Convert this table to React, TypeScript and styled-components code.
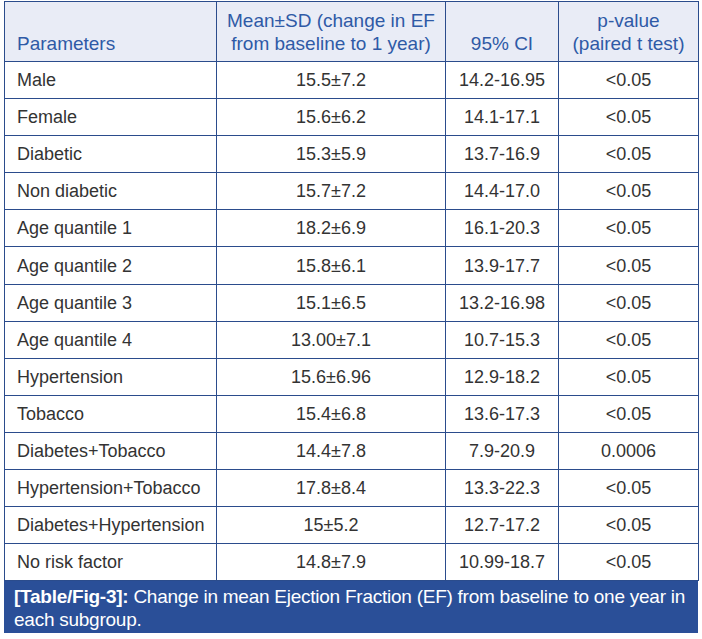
import styled, { createGlobalStyle } from 'styled-components';

const GlobalStyle = createGlobalStyle`
  html, body {
    margin: 0;
    padding: 0;
    background: #ffffff;
  }
  body {
    font-family: "Liberation Sans", Arial, sans-serif;
  }
`;

const Page = styled.div`
  padding: 1px 5px 0 4px;
  width: 694px;
`;

const Table = styled.table`
  width: 694px;
  border-collapse: collapse;
  table-layout: fixed;
  border: 1px solid #2b4c8c;
`;

const HeadCell = styled.th<{ $left?: boolean }>`
  height: 60px;
  padding: 0 6px 6px ${p => (p.$left ? '12px' : '6px')};
  box-sizing: border-box;
  vertical-align: bottom;
  text-align: ${p => (p.$left ? 'left' : 'center')};
  font-weight: 400;
  font-size: 19px;
  line-height: 23px;
  color: #2f5aa6;
  background: #e9ecf6;
  border: 1px solid #2b4c8c;
`;

const Cell = styled.td<{ $left?: boolean }>`
  height: 37.1px;
  padding: 1px 6px 0 ${p => (p.$left ? '12px' : '6px')};
  box-sizing: border-box;
  text-align: ${p => (p.$left ? 'left' : 'center')};
  vertical-align: middle;
  font-size: 18px;
  color: #333333;
  border: 1px solid #2b4c8c;
  white-space: nowrap;
`;

const Caption = styled.div`
  background: #2a4f98;
  color: #ffffff;
  padding: 4px 6px 2px 10px;
  font-size: 19px;
  line-height: 23px;
  letter-spacing: -0.25px;
`;

const Label = styled.b`
  font-weight: 700;
`;

const rows: [string, string, string, string][] = [
  ['Male', '15.5±7.2', '14.2-16.95', '<0.05'],
  ['Female', '15.6±6.2', '14.1-17.1', '<0.05'],
  ['Diabetic', '15.3±5.9', '13.7-16.9', '<0.05'],
  ['Non diabetic', '15.7±7.2', '14.4-17.0', '<0.05'],
  ['Age quantile 1', '18.2±6.9', '16.1-20.3', '<0.05'],
  ['Age quantile 2', '15.8±6.1', '13.9-17.7', '<0.05'],
  ['Age quantile 3', '15.1±6.5', '13.2-16.98', '<0.05'],
  ['Age quantile 4', '13.00±7.1', '10.7-15.3', '<0.05'],
  ['Hypertension', '15.6±6.96', '12.9-18.2', '<0.05'],
  ['Tobacco', '15.4±6.8', '13.6-17.3', '<0.05'],
  ['Diabetes+Tobacco', '14.4±7.8', '7.9-20.9', '0.0006'],
  ['Hypertension+Tobacco', '17.8±8.4', '13.3-22.3', '<0.05'],
  ['Diabetes+Hypertension', '15±5.2', '12.7-17.2', '<0.05'],
  ['No risk factor', '14.8±7.9', '10.99-18.7', '<0.05'],
];

export default function App() {
  return (
    <Page>
      <GlobalStyle />
      <Table>
        <colgroup>
          <col style={{ width: 212 }} />
          <col style={{ width: 229 }} />
          <col style={{ width: 113 }} />
          <col style={{ width: 140 }} />
        </colgroup>
        <thead>
          <tr>
            <HeadCell $left>Parameters</HeadCell>
            <HeadCell>
              Mean±SD (change in EF
              <br />
              from baseline to 1 year)
            </HeadCell>
            <HeadCell>95% CI</HeadCell>
            <HeadCell>
              p-value
              <br />
              (paired t test)
            </HeadCell>
          </tr>
        </thead>
        <tbody>
          {rows.map(r => (
            <tr key={r[0]}>
              <Cell $left>{r[0]}</Cell>
              <Cell>{r[1]}</Cell>
              <Cell>{r[2]}</Cell>
              <Cell>{r[3]}</Cell>
            </tr>
          ))}
        </tbody>
      </Table>
      <Caption>
        <Label>[Table/Fig-3]:</Label> Change in mean Ejection Fraction (EF) from baseline to one year in
        each subgroup.
      </Caption>
    </Page>
  );
}
